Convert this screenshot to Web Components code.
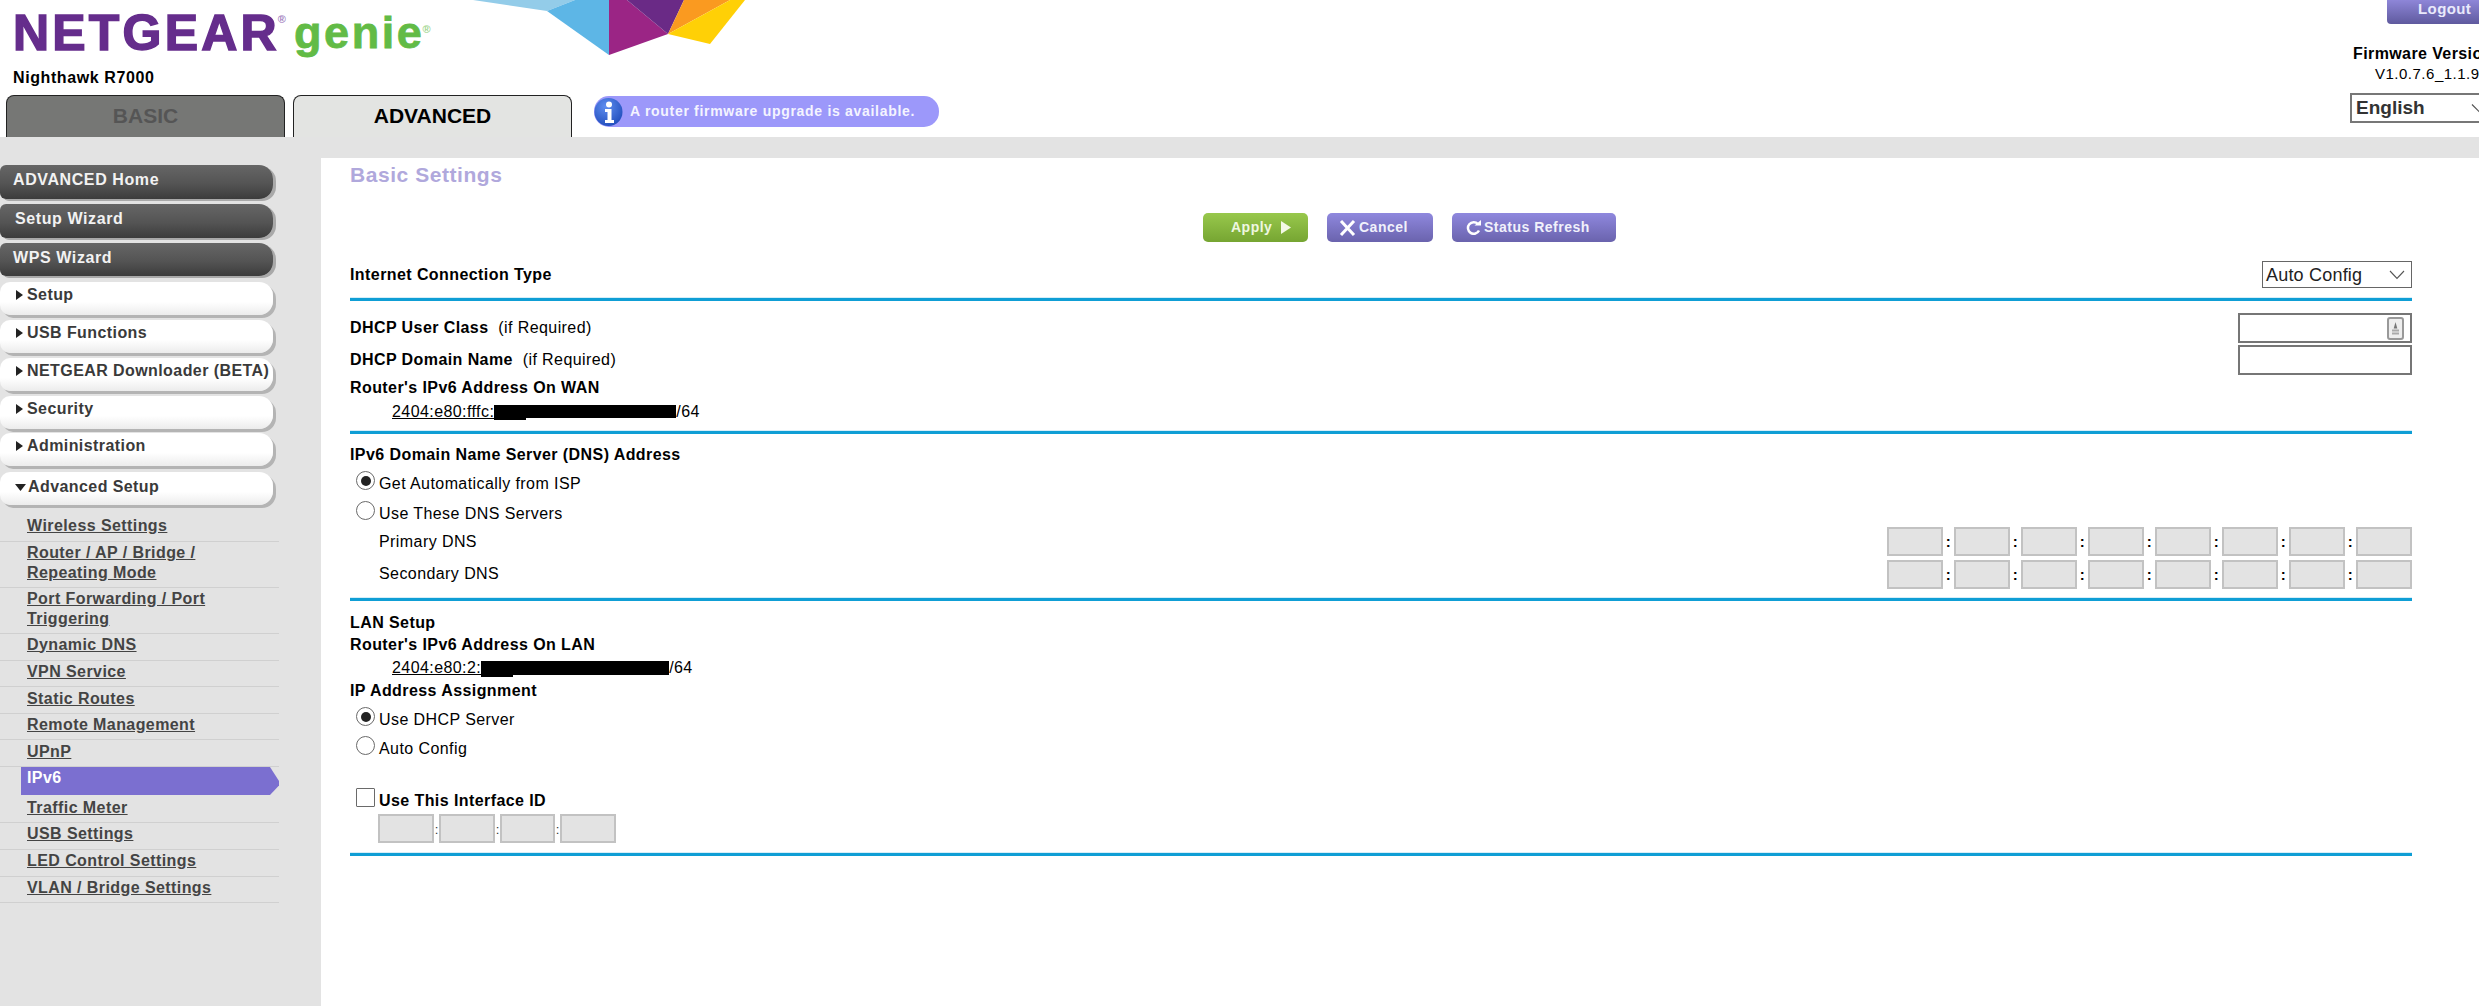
<!DOCTYPE html>
<html lang="en"><head><meta charset="utf-8"><title>NETGEAR genie</title>
<style>
html,body{margin:0;padding:0;height:100%;overflow:hidden;background:#fff}
body{font:15px "Liberation Sans",Arial,sans-serif;color:#000}
</style></head><body>
<ng-app>
  <ng-header slot="header"></ng-header>
  <ng-side slot="side">
    <ng-nav kind="dark" style="height:34px;margin-top:7px">ADVANCED Home</ng-nav>
    <ng-nav kind="dark" style="height:34px;margin-top:5px" pad="15">Setup Wizard</ng-nav>
    <ng-nav kind="dark" style="height:33px;margin-top:5px">WPS Wizard</ng-nav>
    <ng-nav caret="r" style="height:33px;margin-top:6px">Setup</ng-nav>
    <ng-nav caret="r" style="height:33px;margin-top:5px">USB Functions</ng-nav>
    <ng-nav caret="r" style="height:33px;margin-top:5px">NETGEAR Downloader (BETA)</ng-nav>
    <ng-nav caret="r" style="height:33px;margin-top:5px">Security</ng-nav>
    <ng-nav caret="r" style="height:33px;margin-top:4px">Administration</ng-nav>
    <ng-nav caret="d" low style="height:33px;margin-top:6px">Advanced Setup</ng-nav>
    <ng-sub style="height:37px;padding-bottom:6px">Wireless Settings</ng-sub>
    <ng-sub style="height:46px">Router / AP / Bridge /<br>Repeating Mode</ng-sub>
    <ng-sub style="height:46px">Port Forwarding / Port<br>Triggering</ng-sub>
    <ng-sub style="height:27px;padding-bottom:6px">Dynamic DNS</ng-sub>
    <ng-sub style="height:26px">VPN Service</ng-sub>
    <ng-sub style="height:27px">Static Routes</ng-sub>
    <ng-sub style="height:26px">Remote Management</ng-sub>
    <ng-sub style="height:27px">UPnP</ng-sub>
    <ng-sub active style="height:28px">IPv6</ng-sub>
    <ng-sub style="height:28px">Traffic Meter</ng-sub>
    <ng-sub style="height:27px;padding-bottom:6px">USB Settings</ng-sub>
    <ng-sub style="height:27px;padding-bottom:6px">LED Control Settings</ng-sub>
    <ng-sub style="height:26px">VLAN / Bridge Settings</ng-sub>
  </ng-side>
  <ng-main slot="main">
    <ng-title>Basic Settings</ng-title>
    <ng-actions></ng-actions>
    <ng-row style="height:27px;margin-top:19px"><b>Internet Connection Type</b><ng-select slot="end">Auto Config</ng-select></ng-row>
    <ng-rule style="margin-top:10px"></ng-rule>
    <ng-row style="height:30px;margin-top:12px"><b>DHCP User Class</b>&nbsp; (if Required)<ng-field slot="end" key></ng-field></ng-row>
    <ng-row style="height:30px;margin-top:2px"><b>DHCP Domain Name</b>&nbsp; (if Required)<ng-field slot="end"></ng-field></ng-row>
    <ng-row style="height:22px;margin-top:2px"><b>Router's IPv6 Address On WAN</b></ng-row>
    <ng-addr style="margin-top:2px" prefix="2404:e80:fffc:" w="182" h="13"></ng-addr>
    <ng-rule style="margin-top:8px"></ng-rule>
    <ng-row style="height:22px;margin-top:10px"><b>IPv6 Domain Name Server (DNS) Address</b></ng-row>
    <ng-choice checked name="dns" style="margin-top:7px">Get Automatically from ISP</ng-choice>
    <ng-choice name="dns" style="margin-top:8px">Use These DNS Servers</ng-choice>
    <ng-row style="height:29px;margin-top:2px;padding-left:29px">Primary DNS<ng-ip slot="end"></ng-ip></ng-row>
    <ng-row style="height:30px;margin-top:3px;padding-left:29px">Secondary DNS<ng-ip slot="end"></ng-ip></ng-row>
    <ng-rule style="margin-top:9px"></ng-rule>
    <ng-row style="height:22px;margin-top:11px"><b>LAN Setup</b></ng-row>
    <ng-row style="height:22px"><b>Router's IPv6 Address On LAN</b></ng-row>
    <ng-addr style="margin-top:1px" prefix="2404:e80:2:" w="188" h="14"></ng-addr>
    <ng-row style="height:22px;margin-top:1px"><b>IP Address Assignment</b></ng-row>
    <ng-choice checked name="lan" style="margin-top:7px">Use DHCP Server</ng-choice>
    <ng-choice name="lan" style="margin-top:7px">Auto Config</ng-choice>
    <ng-choice box style="margin-top:30px"><b>Use This Interface ID</b></ng-choice>
    <ng-iface style="margin-top:2px"></ng-iface>
    <ng-rule style="margin-top:10px"></ng-rule>
  </ng-main>
</ng-app>
<script>
const def=(name,html)=>{
  customElements.define(name,class extends HTMLElement{
    constructor(){super();this.attachShadow({mode:"open"});}
    connectedCallback(){
      this.shadowRoot.innerHTML=typeof html==="function"?html(this):html;
    }
  });
};
const FONT='"Liberation Sans",Arial,sans-serif';

def("ng-app",`<style>
:host{display:block;width:2560px;height:1006px;font:15px ${FONT}}
.wrap{background:#e3e3e3;height:869px}
.col{display:flex;height:848px;padding-top:21px}
.sidec{width:321px;flex:none}
.mainc{flex:1;background:#fff}
</style>
<slot name="header"></slot>
<div class="wrap"><div class="col"><div class="sidec"><slot name="side"></slot></div><div class="mainc"><slot name="main"></slot></div></div></div>`);

def("ng-header",`<style>
:host{display:block;height:137px;position:relative;overflow:hidden;background:#fff}
.art{position:absolute;left:0;top:0}
.top{display:flex;height:137px}
.left{width:2350px;flex:none}
.brand{height:58px;padding:8px 0 0 13px;box-sizing:border-box;display:flex;align-items:flex-start;white-space:nowrap}
.ng{font:bold 50px/50px ${FONT};letter-spacing:3.2px;color:#652d8c;-webkit-text-stroke:1.500px #652d8c}
.ge{font:bold 45px/50px ${FONT};color:#62bb46;letter-spacing:2.6px;margin-left:6px;-webkit-text-stroke:.8px #62bb46}
sup{font:bold 11px/11px ${FONT};vertical-align:top;position:relative;top:6px;letter-spacing:0;-webkit-text-stroke:0}
.ge sup{top:16px;color:#9fd68e;left:-2px}.ng sup{color:#a27fc0;left:-2px}
.model{font:bold 16px/20px ${FONT};padding-left:13px;height:20px;margin-top:10px;letter-spacing:.6px}
.tabs{display:flex;align-items:flex-start;padding-left:6px;height:42px;margin-top:7px}
.tab{width:279px;height:42px;box-sizing:border-box;border:1.500px solid #222;border-bottom:0;border-radius:8px 8px 0 0;text-align:center;font:bold 21px/40px ${FONT}}
.basic{background:#767775;color:#555}
.adv{background:#e3e4e2;color:#000;margin-left:8px}
.note{margin-left:22px;margin-top:1px;height:31px;width:345px;box-sizing:border-box;background:#9c98fa;border-radius:15px;display:flex;align-items:center;color:#f4f4ff;font:bold 14px/31px ${FONT};letter-spacing:.7px;white-space:nowrap}
.note svg{flex:none;margin-right:7px}
.right{flex:none;width:210px;font-size:15px}
.logout{margin-left:37px;height:24px;width:110px;box-sizing:border-box;padding-left:31px;border-radius:0 0 0 4px;background:linear-gradient(#8e86d8,#5f5a9e);color:#e9e9fb;font:bold 15px/17px ${FONT};letter-spacing:.4px}
.fw{font:bold 16px/20px ${FONT};padding-left:3px;margin-top:20px;white-space:nowrap;letter-spacing:.4px}
.ver{font:15px/20px ${FONT};padding-left:25px;white-space:nowrap;letter-spacing:.5px}
.lang{margin-top:9px;height:30px;width:170px;box-sizing:border-box;border:2px solid #777;display:flex;align-items:center;padding-left:4px;font:bold 19px/26px ${FONT};color:#333}
.lang svg{margin-left:46px}
</style>
<svg class="art" width="760" height="60" viewBox="0 0 760 60" aria-hidden="true">
<polygon points="473,0 547,11 575,0" fill="#93cce9"/>
<polygon points="547,11 575,0 609,0 609,55" fill="#5db6e6"/>
<polygon points="609,0 627,0 668,34 609,55" fill="#9b2585"/>
<polygon points="627,0 684,0 668,34" fill="#6a2a86"/>
<polygon points="684,0 730,0 668,34" fill="#fa9a20"/>
<polygon points="730,0 745,0 710,44 668,34" fill="#ffd006"/>
</svg>
<div class="top">
  <div class="left">
    <div class="brand" style="position:relative"><span class="ng">NETGEAR<sup>®</sup></span><span class="ge">genie<sup>®</sup></span></div>
    <div class="model">Nighthawk R7000</div>
    <div class="tabs">
      <div class="tab basic">BASIC</div>
      <div class="tab adv">ADVANCED</div>
      <div class="note"><svg width="29" height="29" viewBox="0 0 29 29"><defs><radialGradient id="i" cx=".4" cy=".3" r=".8"><stop offset="0" stop-color="#5f8ef0"/><stop offset="1" stop-color="#1c48b8"/></radialGradient></defs><circle cx="14.500" cy="15" r="14" fill="url(#i)"/><circle cx="15" cy="7.500" r="3" fill="#fff"/><path d="M11 12h6.500v11h2.500v3h-9v-3h2.500v-8h-2.500z" fill="#fff"/></svg>A router firmware upgrade is available.</div>
    </div>
  </div>
  <div class="right">
    <div class="logout">Logout</div>
    <div class="fw">Firmware Version</div>
    <div class="ver">V1.0.7.6_1.1.99</div>
    <div class="lang">English<svg width="16" height="10" viewBox="0 0 16 10"><path d="M1 1.500l7 7 7-7" fill="none" stroke="#555" stroke-width="1.200"/></svg></div>
  </div>
</div>`);

def("ng-side",`<style>:host{display:block;width:279px;font:bold 15px ${FONT}}</style><slot></slot>`);

def("ng-nav",e=>{
  const dark=e.getAttribute("kind")==="dark",c=e.getAttribute("caret"),pad=e.getAttribute("pad")||13;
  const icon=c==="r"?`<svg width="9" height="12" viewBox="0 0 9 12"><path d="M1 1l7 5-7 5z" fill="#222"/></svg>`:c==="d"?`<svg width="11" height="8" viewBox="0 0 11 8"><path d="M0 1h11L5.500 8z" fill="#222"/></svg>`:"";
  return `<style>
:host{display:block;box-sizing:border-box;width:273px;border-radius:${dark?"6px 14px 14px 6px":"10px 14px 14px 10px"};
 box-shadow:${dark?"3px 2px 0 #a9a9a9":"3px 3px 0 #b4b4b4"};
 background:${dark?"linear-gradient(#666,#545454 55%,#3c3c3c)":"linear-gradient(#fff,#fff 60%,#ececec)"};}
.t{display:flex;align-items:center;gap:${c==="d"?2:3}px;height:100%;box-sizing:border-box;padding:0 0 ${dark?4:e.hasAttribute("low")?4:7}px ${c?15:pad}px;
 color:${dark?"#f2f2f2":"#3a3a3a"};font:bold 16px/20px ${FONT};letter-spacing:${dark?.6:.42}px;white-space:nowrap}
</style><div class="t">${icon}<slot></slot></div>`});

def("ng-sub",e=>{
  const act=e.hasAttribute("active");
  return `<style>
:host{display:flex;align-items:${act?"flex-start":"flex-end"};box-sizing:border-box;width:279px;padding:0 0 ${act?0:5}px 27px;
 ${act?"background:#7b6fd0;margin-left:21px;width:258px;padding-left:6px;clip-path:polygon(0 0,calc(100% - 9px) 0,100% 50%,100% 66%,calc(100% - 9px) 100%,0 100%);":"border-bottom:1.500px solid #d0d0d0;"}
 font:bold 16px/19.500px ${FONT};letter-spacing:.42px;color:${act?"#fff":"#444"}}
div{${act?"margin-top:1px":"text-decoration:underline"}}
</style><div><slot></slot></div>`});

def("ng-main",`<style>:host{display:block;padding-left:29px;width:2062px;font:16px ${FONT};letter-spacing:.42px}</style><slot></slot>`);
def("ng-title",`<style>:host{display:block;height:55px;font:bold 21px/34px ${FONT};color:#b0a8dc;letter-spacing:.55px}</style><slot></slot>`);

def("ng-actions",`<style>
:host{display:flex;gap:19px;padding-left:853px;height:29px}
.b{height:29px;box-sizing:border-box;border-radius:5px;display:flex;align-items:center;color:#f1f1fb;font:bold 14px/29px ${FONT};letter-spacing:.5px;white-space:nowrap}
.a{width:105px;padding-left:28px;gap:8px;background:linear-gradient(#98c84c,#76a532);color:#eef7e0}
.c{width:106px;padding-left:12px;gap:3px;background:linear-gradient(#8f88de,#6a63ad)}
.r{width:164px;padding-left:14px;gap:3px;background:linear-gradient(#8f88de,#6a63ad)}
</style>
<div class="b a">Apply<svg width="11" height="13" viewBox="0 0 11 13"><path d="M1 0l10 6.500L1 13z" fill="#f3f8e6"/></svg></div>
<div class="b c"><svg width="17" height="16" viewBox="0 0 17 16"><path d="M2 1l13 14M15 1L2 15" stroke="#fff" stroke-width="3"/></svg>Cancel</div>
<div class="b r"><svg width="15" height="15" viewBox="0 0 15 15"><path d="M12 4A5.800 5.800 0 1 0 13 10.500" fill="none" stroke="#fff" stroke-width="2.500"/><path d="M8.500 5.500H15V0z" fill="#fff"/></svg>Status Refresh</div>`);

def("ng-row",`<style>
:host{display:flex;align-items:center;justify-content:space-between;box-sizing:border-box;width:2062px;font:16px/22px ${FONT}}
.l{white-space:pre-wrap}
</style><div class="l"><slot></slot></div><slot name="end"></slot>`);

def("ng-rule",`<style>:host{display:block;height:3px;width:2062px;background:#0f9ed5;box-shadow:0 -1px 0 #d6eef8}</style>`);

def("ng-select",`<style>
:host{display:flex;align-items:center;justify-content:space-between;box-sizing:border-box;width:150px;height:27px;border:1.500px solid #666;padding:0 6px 0 3px;font:18px/24px ${FONT};color:#222;background:#fff;letter-spacing:.2px}
</style><slot></slot><svg width="16" height="10" viewBox="0 0 16 10"><path d="M1 1l7 7.500L15 1" fill="none" stroke="#555" stroke-width="1.100"/></svg>`);

def("ng-field",e=>`<style>
:host{display:block;position:relative;width:174px;height:30px}
input{display:block;width:100%;height:100%;box-sizing:border-box;border:2px solid #767676;background:#fff;margin:0;padding:0;outline:0}
svg{position:absolute;right:8px;top:4px}
</style><input type="text" aria-label="value">${e.hasAttribute("key")?`<svg width="17" height="23" viewBox="0 0 17 23"><rect x="1" y="1" width="15" height="21" rx="2" fill="#eee" stroke="#999" stroke-width="2"/><path d="M8.500 5l1.800 6.500h-3.600z" fill="#777"/><path d="M5 13.500h7M5 16.500h7" stroke="#aaa" stroke-width="2"/></svg>`:""}`);

const BOX=`input{display:block;box-sizing:border-box;height:100%;margin:0;padding:0;border:2px solid #c2c2c2;background:#e3e3e3;outline:0}`;
def("ng-ip",`<style>
:host{display:grid;grid-template-columns:repeat(8,56px);column-gap:11px;height:29px}
.c{position:relative;height:29px}
${BOX}input{width:100%}
i{position:absolute;left:100%;width:11px;text-align:center;top:0;font:bold 15px/29px ${FONT}}
</style>${Array.from({length:8},(_,n)=>`<div class="c"><input disabled aria-label="part ${n+1}">${n<7?"<i>:</i>":""}</div>`).join("")}`);

def("ng-iface",`<style>
:host{display:flex;padding-left:28px;height:29px;color:#333;font:13px/31px ${FONT};letter-spacing:0}
${BOX}input{width:56px}
span{width:5px;text-align:center}
</style><input disabled aria-label="a"><span>:</span><input disabled aria-label="b"><span>:</span><input disabled aria-label="c" style="width:55px"><span>:</span><input disabled aria-label="d">`);

def("ng-addr",e=>{
  const w=+e.getAttribute("w"),h=+e.getAttribute("h");
  return `<style>
:host{display:flex;align-items:center;height:22px;padding-left:42px;font:16px/22px ${FONT};letter-spacing:.42px;white-space:nowrap}
u{text-decoration:underline}
.r{display:block;position:relative;width:${w}px;height:${h}px;background:#000;margin-top:-1px}
.r::after{content:"";position:absolute;left:0;top:100%;width:32px;height:2px;background:#000}
</style><u>${e.getAttribute("prefix")}</u><span class="r"></span>/64`});

def("ng-choice",e=>{
  const box=e.hasAttribute("box");
  return `<style>
:host{display:flex;align-items:flex-start;height:22px;padding-left:6px;font:16px/22px ${FONT};letter-spacing:.42px;white-space:nowrap}
input{appearance:none;-webkit-appearance:none;flex:none;box-sizing:border-box;width:19px;height:19px;margin:-2px 4px 0 0;border:1.500px solid #6a6a6a;background:#fff;display:grid;place-items:center;border-radius:${box?"1px":"50%"}}
input:checked::before{content:"";width:10px;height:10px;border-radius:50%;background:#222}
</style><input type="${box?"checkbox":"radio"}" ${e.hasAttribute("checked")?"checked":""} ${e.getAttribute("name")?`name="${e.getAttribute("name")}"`:""} aria-label="option"><span><slot></slot></span>`});
</script>
</body></html>
